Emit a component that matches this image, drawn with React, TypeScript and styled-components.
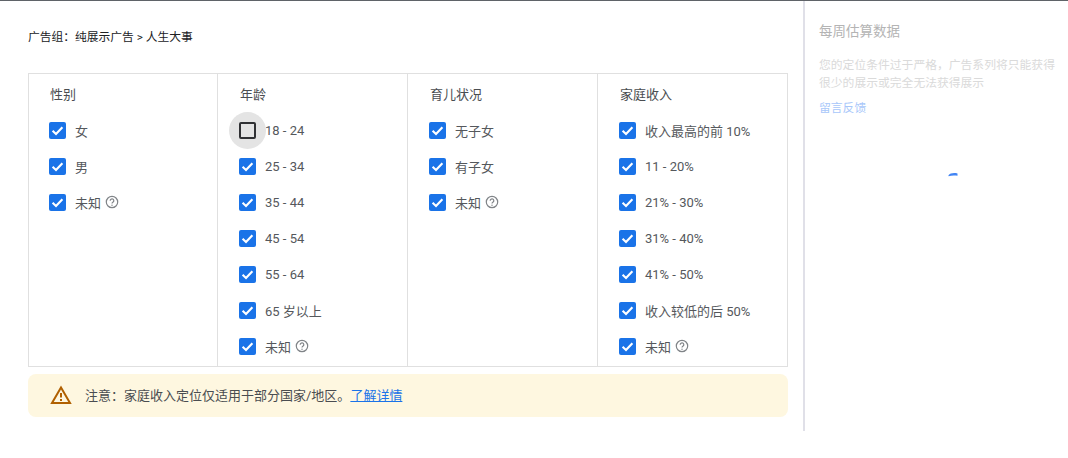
import React from "react";
import styled, { createGlobalStyle } from "styled-components";

const Global = createGlobalStyle`
  html, body { margin: 0; padding: 0; background: #fff; }
  body { font-family: Roboto, "Noto Sans CJK SC", sans-serif; color: #3c4043; }
`;

const Page = styled.div`
  width: 1068px;
  height: 458px;
  box-sizing: border-box;
  border-top: 1px solid #5f6368;
  display: flex;
  align-items: flex-start;
  overflow: hidden;
`;

const Main = styled.main`
  width: 803px;
  box-sizing: border-box;
  padding: 28px 15px 0 28px;
`;

const Crumb = styled.div`
  font-size: 11.75px;
  line-height: 16px;
  color: #202124;
  margin-bottom: 28px;
`;

const Table = styled.div`
  display: grid;
  grid-template-columns: 188px 190px 190px 190px;
  width: 760px;
  height: 294px;
  box-sizing: border-box;
  border: 1px solid #e0e0e0;
`;

const Column = styled.section<{ $first?: boolean }>`
  box-sizing: border-box;
  border-left: ${(p) => (p.$first ? "none" : "1px solid #e0e0e0")};
  padding: 13px 0 0 ${(p) => (p.$first ? 20 : 21)}px;
`;

const Heading = styled.div`
  font-size: 13px;
  line-height: 16px;
  color: #4a4d51;
  padding-left: 1px;
  margin-bottom: 9px;
`;

const Row = styled.label`
  position: relative;
  display: flex;
  align-items: center;
  height: 36px;
  font-size: 13px;
  color: #55585c;
`;

const Box = styled.span<{ $on: boolean }>`
  position: relative;
  flex: none;
  width: 17px;
  height: 17px;
  box-sizing: border-box;
  border-radius: 2px;
  margin-right: 9px;
  background: ${(p) => (p.$on ? "#1a73e8" : "#e4e4e4")};
  border: ${(p) => (p.$on ? "none" : "2px solid #303134")};
  display: flex;
  align-items: center;
  justify-content: center;
`;

const Halo = styled.span`
  position: absolute;
  left: -10px;
  top: -10px;
  width: 37px;
  height: 37px;
  border-radius: 50%;
  background: #e4e4e4;
  z-index: -1;
`;

const BoxWrap = styled.span`
  position: relative;
  z-index: 0;
  display: flex;
`;

const HelpIcon = styled.svg`
  width: 14px;
  height: 14px;
  margin-left: 4px;
  flex: none;
`;

const Notice = styled.div`
  display: flex;
  align-items: center;
  width: 760px;
  height: 43px;
  margin-top: 7px;
  box-sizing: border-box;
  padding: 0 0 2px 22px;
  border-radius: 8px;
  background: #fef7e0;
  font-size: 13px;
  color: #4a4d51;
`;

const NoticeIcon = styled.svg`
  width: 22px;
  height: 22px;
  margin-right: 13px;
  flex: none;
`;

const Link = styled.a`
  color: #1a73e8;
  text-decoration: underline;
`;

const Side = styled.aside`
  width: 265px;
  height: 430px;
  box-sizing: border-box;
  border-left: 2px solid #e0e0e8;
  padding: 21px 0 0 14px;
  position: relative;
`;

const SideTitle = styled.div`
  font-size: 13.5px;
  line-height: 18px;
  color: #b4b4b4;
  margin-bottom: 16px;
`;

const SideText = styled.div`
  font-size: 11.8px;
  line-height: 18px;
  color: #dadada;
  width: 240px;
  margin-bottom: 7px;
`;

const SideLink = styled.div`
  font-size: 11.8px;
  line-height: 18px;
  color: #a8c7fa;
`;

const Spinner = styled.svg`
  position: absolute;
  left: 143px;
  top: 171px;
  width: 10px;
  height: 5px;
`;

const Check = () => (
  <svg width="13" height="13" viewBox="0 0 13 13" fill="none">
    <path d="M1.6 6.8 L5 10 L11.4 3.2" stroke="#fff" strokeWidth="2.1" />
  </svg>
);

const Help = () => (
  <HelpIcon viewBox="0 0 14 14" fill="none">
    <circle cx="7" cy="7" r="5.7" stroke="#808488" strokeWidth="1.2" />
    <path d="M5.2 5.7a1.8 1.8 0 1 1 2.9 1.4c-.7.5-1.1.8-1.1 1.5" stroke="#808488" strokeWidth="1.2" />
    <circle cx="7" cy="10.2" r=".7" fill="#808488" />
  </HelpIcon>
);

type Item = { label: string; off?: boolean; help?: boolean };
type Col = { title: string; items: Item[] };

const cols: Col[] = [
  { title: "性别", items: [{ label: "女" }, { label: "男" }, { label: "未知", help: true }] },
  {
    title: "年龄",
    items: [
      { label: "18 - 24", off: true },
      { label: "25 - 34" },
      { label: "35 - 44" },
      { label: "45 - 54" },
      { label: "55 - 64" },
      { label: "65 岁以上" },
      { label: "未知", help: true },
    ],
  },
  { title: "育儿状况", items: [{ label: "无子女" }, { label: "有子女" }, { label: "未知", help: true }] },
  {
    title: "家庭收入",
    items: [
      { label: "收入最高的前 10%" },
      { label: "11 - 20%" },
      { label: "21% - 30%" },
      { label: "31% - 40%" },
      { label: "41% - 50%" },
      { label: "收入较低的后 50%" },
      { label: "未知", help: true },
    ],
  },
];

export default function App() {
  return (
    <Page>
      <Global />
      <Main>
        <Crumb>{"\u5E7F\u544A\u7EC4\uFF1A\u7EAF\u5C55\u793A\u5E7F\u544A > \u4EBA\u751F\u5927\u4E8B"}</Crumb>
        <Table>
          {cols.map((c, i) => (
            <Column key={c.title} $first={i === 0}>
              <Heading>{c.title}</Heading>
              {c.items.map((it) => (
                <Row key={it.label}>
                  <BoxWrap>
                    {it.off && <Halo />}
                    <Box $on={!it.off}>{!it.off && <Check />}</Box>
                  </BoxWrap>
                  {it.label}
                  {it.help && <Help />}
                </Row>
              ))}
            </Column>
          ))}
        </Table>
        <Notice>
          <NoticeIcon viewBox="0 0 22 22" fill="none">
            <path d="M11 3.5 L20 19 H2 Z" stroke="#b06000" strokeWidth="2" strokeLinejoin="miter" />
            <rect x="10" y="9" width="2" height="4.5" fill="#b06000" />
            <rect x="10" y="15" width="2" height="2" fill="#b06000" />
          </NoticeIcon>
          {"\u6CE8\u610F\uFF1A\u5BB6\u5EAD\u6536\u5165\u5B9A\u4F4D\u4EC5\u9002\u7528\u4E8E\u90E8\u5206\u56FD\u5BB6/\u5730\u533A\u3002"}
          <Link>了解详情</Link>
        </Notice>
      </Main>
      <Side>
        <SideTitle>每周估算数据</SideTitle>
        <SideText>{"\u60A8\u7684\u5B9A\u4F4D\u6761\u4EF6\u8FC7\u4E8E\u4E25\u683C\uFF0C\u5E7F\u544A\u7CFB\u5217\u5C06\u53EA\u80FD\u83B7\u5F97\u5F88\u5C11\u7684\u5C55\u793A\u6216\u5B8C\u5168\u65E0\u6CD5\u83B7\u5F97\u5C55\u793A"}</SideText>
        <SideLink>留言反馈</SideLink>
        <Spinner viewBox="0 0 10 5">
          <path d="M0.5 3.2 C2 1 6 0.6 9.5 1.4 L9.5 3.8 C6 3.4 3 3.6 0.5 4.2 Z" fill="#4285f4" />
        </Spinner>
      </Side>
    </Page>
  );
}
